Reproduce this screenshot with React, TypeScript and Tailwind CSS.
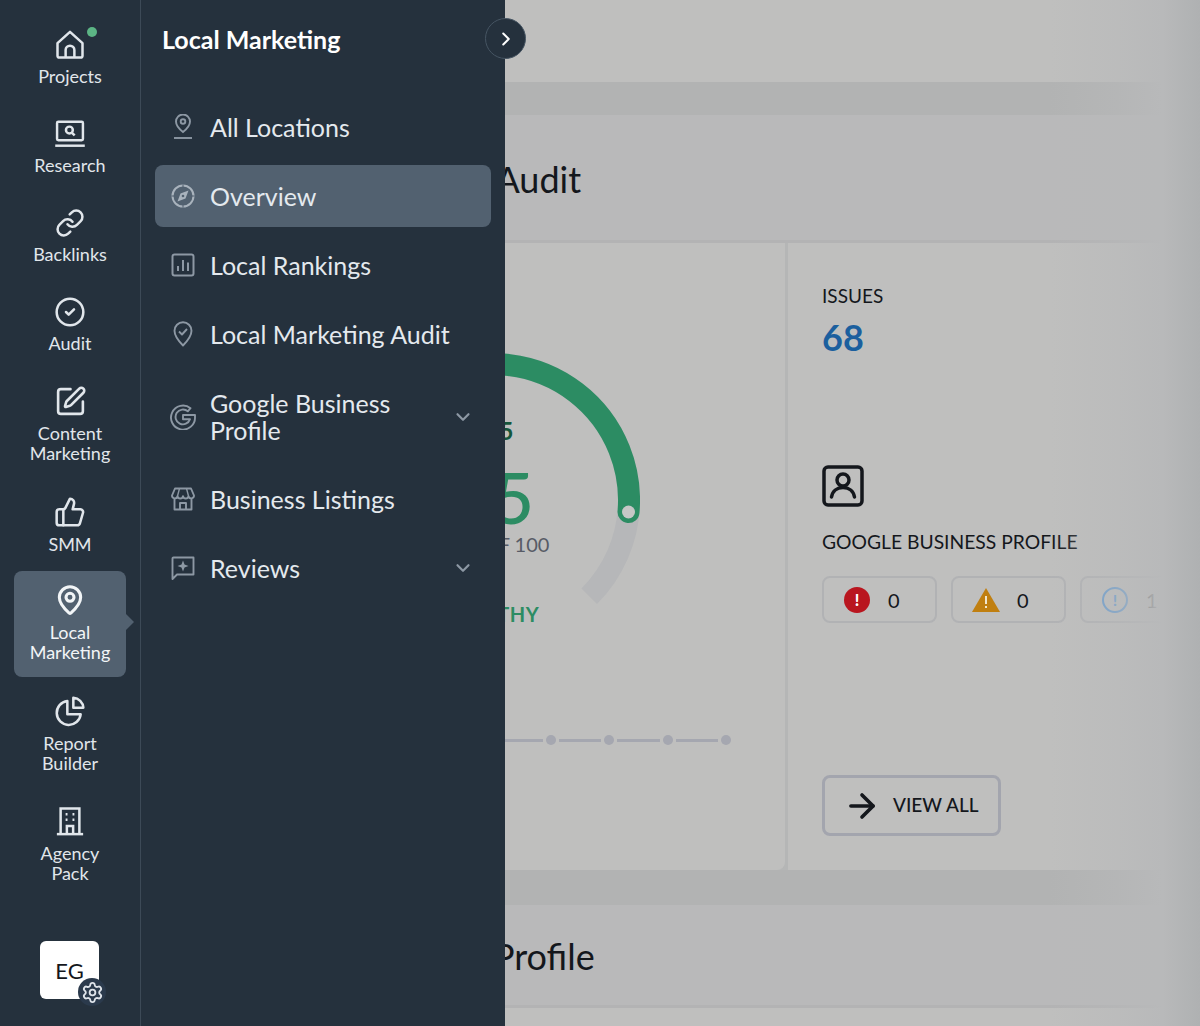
import { ReactNode } from 'react'
import {
  ArrowRight,
  ChevronDown,
  ChevronRight,
  CircleCheck,
  Link,
  MapPin,
  Settings,
  SquarePen,
  ThumbsUp,
} from 'lucide-react'

const font = { fontFamily: 'Lato, "Noto Sans", sans-serif' }

// custom icons where lucide has no close match
function HomeIcon() {
  return (
    <svg width="30" height="30" viewBox="0 0 24 24" fill="none" stroke="currentColor" strokeWidth="2" strokeLinejoin="round">
      <path d="M2 10.500 12 1.500l10 9V20.500a1.500 1.500 0 0 1-1.500 1.500H3.500A1.500 1.500 0 0 1 2 20.500z" />
      <path d="M8.500 22v-6a3.500 3.500 0 0 1 7 0v6" />
    </svg>
  )
}

function ResearchIcon() {
  return (
    <svg width="32" height="30" viewBox="0 0 26 24" fill="none" stroke="currentColor" strokeWidth="2">
      <rect x="2.500" y="2" width="21" height="15" rx="1" />
      <path d="M1 21.500h24" />
      <circle cx="12.500" cy="8.800" r="2.800" />
      <path d="m14.600 11 2.200 2.200" />
    </svg>
  )
}

function PieIcon() {
  return (
    <svg width="32" height="32" viewBox="0 0 24 24" fill="none" stroke="currentColor" strokeWidth="1.900" strokeLinejoin="round">
      <path d="M10 4.500a9 9 0 1 0 10 10h-10z" />
      <path d="M14.500 2a8 8 0 0 1 7.500 7.500h-7.500z" />
    </svg>
  )
}

function BuildingIcon() {
  return (
    <svg width="30" height="30" viewBox="0 0 24 24" fill="none" stroke="currentColor" strokeWidth="2">
      <path d="M4.500 22.500V2h15v20.500" />
      <path d="M1.500 22.500h21" />
      <path d="M9.500 22.500V16h5v6.500" />
      <path d="M8.500 6.500h1.500M14 6.500h1.500M8.500 11h1.500M14 11h1.500" />
    </svg>
  )
}

function LocationLineIcon() {
  return (
    <svg width="24" height="26" viewBox="0 0 24 26" fill="none" stroke="currentColor" strokeWidth="1.900">
      <path d="M12 18s-7-5.500-7-10.500a7 7 0 0 1 14 0C19 12.500 12 18 12 18z" />
      <circle cx="12" cy="7.500" r="2.300" />
      <path d="M3 24h18" />
    </svg>
  )
}

function CompassIcon() {
  return (
    <svg width="24" height="24" viewBox="0 0 24 24" fill="none">
      <circle cx="12" cy="12" r="10.500" stroke="currentColor" strokeWidth="2" />
      <path d="M12 .500v3M12 20.500v3M.500 12h3M20.500 12h3" stroke="#526170" strokeWidth="1" />
      <path d="M17.500 6.500 14.500 14.500 6.500 17.500 9.500 9.500z" fill="currentColor" />
      <circle cx="12" cy="12" r="1.300" fill="#526170" />
    </svg>
  )
}

function RankingsIcon() {
  return (
    <svg width="24" height="24" viewBox="0 0 24 24" fill="none" stroke="currentColor" strokeWidth="2">
      <rect x="1.500" y="1.500" width="21" height="21" rx="2" />
      <path d="M7 18v-5M12 18V7M17 18V9.500" />
    </svg>
  )
}

function PinCheckIcon() {
  return (
    <svg width="20" height="26" viewBox="0 0 20 26" fill="none" stroke="currentColor" strokeWidth="1.900" strokeLinejoin="round">
      <path d="M10 24.500S1.500 16 1.500 9.800a8.500 8.500 0 0 1 17 0C18.500 16 10 24.500 10 24.500z" />
      <path d="m6 10.500 3 3 5-5.500" />
    </svg>
  )
}

function GoogleOutlineIcon() {
  return (
    <svg width="26" height="26" viewBox="0 0 26 26" fill="none" stroke="currentColor" strokeWidth="1.900" strokeLinejoin="round">
      <path d="M20.500 4.200A12 12 0 1 0 25 13v-2H13v4.200h7A7.400 7.400 0 1 1 17.800 7.300z" />
    </svg>
  )
}

function StoreOutlineIcon() {
  return (
    <svg width="24" height="24" viewBox="0 0 24 24" fill="none" stroke="currentColor" strokeWidth="1.900" strokeLinejoin="round">
      <path d="M4 1.500h16l3 7a2.800 2.800 0 0 1-5.500.8 2.800 2.800 0 0 1-5.500 0 2.800 2.800 0 0 1-5.500 0A2.800 2.800 0 0 1 1 8.500z" />
      <path d="M3.500 12v10.500h17V12" />
      <path d="M9 22.500V16h6v6.500" />
      <path d="M8.500 1.500 6.500 9M15.500 1.500l2 7.500" strokeWidth="1.400" />
    </svg>
  )
}

function ReviewIcon() {
  return (
    <svg width="24" height="24" viewBox="0 0 24 24" fill="none" stroke="currentColor" strokeWidth="1.900" strokeLinejoin="round">
      <path d="M1.500 23V2.500a1 1 0 0 1 1-1h20v17H6z" />
      <path d="M12 4.500 13.500 8.500 17.500 10l-4 1.500L12 15.500l-1.500-4L6.500 10l4-1.500z" fill="currentColor" stroke="none" />
    </svg>
  )
}

function ProfileIcon() {
  return (
    <svg width="42" height="42" viewBox="0 0 42 42" fill="none" stroke="currentColor" strokeWidth="3.500">
      <rect x="2" y="2" width="38" height="38" rx="4" />
      <circle cx="21" cy="15" r="6" />
      <path d="M9.500 32c1-6 5.500-9.500 11.500-9.500S31.500 26 32.500 32" strokeLinecap="round" />
    </svg>
  )
}

function RailItem({
  icon,
  label,
  box,
  gap,
  active,
  dot,
}: {
  icon: ReactNode
  label: ReactNode
  box: string
  gap: string
  active?: boolean
  dot?: boolean
}) {
  return (
    <div
      className={`relative flex flex-col items-center mx-[14px] text-[18px] leading-5 text-center ${box} ${
        active ? 'rounded-lg bg-[#526170] text-[#f2f5f7]' : 'text-[#e1e6eb]'
      }`}
    >
      <div className="h-[30px] flex items-center justify-center">{icon}</div>
      <div className={gap}>{label}</div>
      {dot && <span className="absolute left-[73px] -top-[3px] w-2.5 h-2.5 rounded-full bg-[#5cb585]" />}
      {active && <span className="absolute -right-2 top-[43px] w-0 h-0 border-y-8 border-y-transparent border-l-8 border-l-[#526170]" />}
    </div>
  )
}

function SideRow({ icon, label, active, chevron, tall }: { icon: ReactNode; label: ReactNode; active?: boolean; chevron?: boolean; tall?: boolean }) {
  return (
    <div
      className={`flex items-center rounded-lg pl-[15px] pr-[17px] text-[25px] leading-[27px] text-[#e4e9ee] ${
        tall ? 'h-[89px]' : 'h-[62px]'
      } ${active ? 'bg-[#526170]' : ''}`}
    >
      <div className={`w-[26px] flex justify-center ${active ? 'text-[#a9b3bd]' : 'text-[#8d98a4]'}`}>{icon}</div>
      <div className="ml-[14px] flex-1">{label}</div>
      {chevron && <ChevronDown size={22} strokeWidth={2.4} className="text-[#8d98a4]" />}
    </div>
  )
}

function Badge({ icon, value }: { icon: ReactNode; value: string }) {
  return (
    <div className="w-[115px] h-[47px] shrink-0 flex items-center rounded-lg border-2 border-[#b1b2b4] pl-[19px]">
      <div className="w-7 flex justify-center">{icon}</div>
      <span className="ml-[17px] text-xl text-[#14171c]">{value}</span>
    </div>
  )
}

function Gauge() {
  return (
    <div className="relative w-[294px] h-[294px] flex flex-col items-center pt-[63px]">
      <svg className="absolute inset-0" width="294" height="294" viewBox="0 0 294 294" fill="none">
        <path d="M50.800 243.200A136 136 0 1 1 243.200 243.200" stroke="#b6b7b9" strokeWidth="22" />
        <path d="M50.800 243.200A136 136 0 1 1 282.500 159" stroke="#2c8c63" strokeWidth="22" strokeLinecap="round" />
        <circle cx="282.500" cy="159" r="6.500" fill="#c6c7c6" />
      </svg>
      <div className="relative text-2xl leading-[30px] font-bold text-[#14563b]">+15</div>
      <div className="relative mt-[17px] text-[72px] leading-[66px] font-medium text-[#2c8c63]">85</div>
      <div className="relative mt-[3px] text-xl leading-6 text-[#575b66]">OUT OF 100</div>
      <div className="relative mt-[46px] text-xl leading-6 font-bold tracking-wide text-[#2c8c63]">HEALTHY</div>
    </div>
  )
}

export default function App() {
  const points = [0, 1, 2, 3, 4, 5, 6, 7, 8]

  return (
    <div className="relative flex w-[1200px] h-[1026px] overflow-hidden bg-[#bfbfbe]" style={font}>
      {/* Left rail */}
      <nav className="w-[141px] shrink-0 flex flex-col bg-[#25313d] border-r border-[#3d4a57] pt-[30px]">
        <RailItem icon={<HomeIcon />} label="Projects" box="h-[89px]" gap="mt-1.5" dot />
        <RailItem icon={<ResearchIcon />} label="Research" box="h-[89px]" gap="mt-1.5" />
        <RailItem icon={<Link size={30} strokeWidth={2} />} label="Backlinks" box="h-[89px]" gap="mt-1.5" />
        <RailItem icon={<CircleCheck size={32} strokeWidth={1.9} />} label="Audit" box="h-[89px]" gap="mt-1.5" />
        <RailItem icon={<SquarePen size={33} strokeWidth={1.9} />} label={<>Content<br />Marketing</>} box="h-[111px]" gap="mt-[7px]" />
        <RailItem icon={<ThumbsUp size={32} strokeWidth={1.9} />} label="SMM" box="h-[74px]" gap="mt-[7px]" />
        <RailItem
          icon={<MapPin size={32} strokeWidth={2.300} />}
          label={<>Local<br />Marketing</>}
          box="h-[106px] pt-[14px]"
          gap="mt-[7px]"
          active
        />
        <div className="mt-[19px]">
          <RailItem icon={<PieIcon />} label={<>Report<br />Builder</>} box="h-[110px]" gap="mt-[7px]" />
        </div>
        <RailItem icon={<BuildingIcon />} label={<>Agency<br />Pack</>} box="h-[80px]" gap="mt-[7px]" />
        <div className="mt-auto mb-[27px] ml-10 relative w-[59px] h-[58px] rounded-md bg-white flex items-center justify-center text-[22px] text-[#14171c]">
          EG
          <span className="absolute -right-[7px] -bottom-[7px] w-7 h-7 rounded-full bg-[#2b3a4c] flex items-center justify-center text-[#dfe4ea]">
            <Settings size={23} strokeWidth={1.9} />
          </span>
        </div>
      </nav>

      {/* Page behind the panel */}
      <main className="flex-1 min-w-0">
        <div className="h-[82px] bg-[#bfbfbe]" />
        <div className="h-[33px] bg-[#b2b3b3]" />
        <div className="h-[125px] flex items-center pl-[95px] pt-0.5 bg-[#b9b9ba] text-[36px] text-[#14171c] whitespace-nowrap">Local Marketing Audit</div>
        <div className="h-[3px] bg-[#b3b3b4]" />
        <div className="h-[627px] flex pl-[59px] gap-[3px] bg-[#b5b6b6]">
          <div className="w-[585px] flex flex-col items-center pt-[110px] bg-[#bfbfbe] rounded-br-lg">
            <Gauge />
            <div className="mt-[88px] flex items-center">
              {points.map((i) => (
                <div key={i} className="flex items-center">
                  {i > 0 && <span className="w-[42.400px] h-[3px] mx-[3px] bg-[#a5a7b0]" />}
                  <span className="w-2.5 h-2.5 rounded-full bg-[#a5a7b0]" />
                </div>
              ))}
            </div>
          </div>
          <div className="flex-1 min-w-0 pl-[34px] pt-[43px] bg-[#bfbfbe] text-[#14171c]">
            <div className="text-[19px] leading-5">ISSUES</div>
            <div className="mt-[11px] text-[36px] leading-10 font-bold text-[#1b5f9e]">68</div>
            <div className="mt-[108px]">
              <ProfileIcon />
            </div>
            <div className="mt-[25px] text-[19.300px] leading-5 whitespace-nowrap">GOOGLE BUSINESS PROFILE</div>
            <div className="mt-6 flex gap-[14px]">
              <Badge
                value="0"
                icon={
                  <span className="w-[26px] h-[26px] rounded-full bg-[#b9161f] flex items-center justify-center text-white text-base font-black">!</span>
                }
              />
              <Badge
                value="0"
                icon={
                  <svg width="28" height="26" viewBox="0 0 28 26">
                    <path d="M14 1 28 25H0z" fill="#c07f10" />
                    <path d="M13 9h2v8h-2zM13 19h2v2h-2z" fill="#f1e6cc" />
                  </svg>
                }
              />
              <Badge
                value="1"
                icon={
                  <span className="w-[26px] h-[26px] rounded-full border-2 border-[#5f98d0] flex items-center justify-center text-[#5f98d0] text-base font-bold">!</span>
                }
              />
            </div>
            <div className="mt-[152px] w-[179px] h-[61px] flex items-center rounded-lg border-[3px] border-[#a3a5ae] pl-[18px]">
              <ArrowRight size={38} strokeWidth={2.300} />
              <span className="ml-3 text-[19px] font-medium">VIEW ALL</span>
            </div>
          </div>
        </div>
        <div className="h-[35px] bg-[#b2b3b3]" />
        <div className="h-[100px] flex items-center pl-[83px] pt-0.5 bg-[#b9b9ba] text-[36px] text-[#14171c] whitespace-nowrap">Google Business Profile</div>
        <div className="h-[21px] bg-[#bfbfbe] border-t-[3px] border-[#b3b3b4]" />
      </main>

      {/* Fade on the right edge of the page */}
      <div className="absolute right-0 top-0 bottom-0 w-[150px] bg-[linear-gradient(to_right,transparent,rgba(184,185,186,0.5)_45%,#b8b9ba_75%,#afb1b2)] pointer-events-none" />

      {/* Open panel over the page */}
      <aside className="absolute left-[141px] top-0 bottom-0 w-[364px] bg-[#25313d]">
        <div className="pl-[21px] pt-[23px] h-[96px] text-[25px] leading-8 font-bold text-white">Local Marketing</div>
        <div className="flex flex-col gap-[7px] pl-[14px] pr-[14px]">
          <SideRow icon={<LocationLineIcon />} label="All Locations" />
          <SideRow icon={<CompassIcon />} label="Overview" active />
          <SideRow icon={<RankingsIcon />} label="Local Rankings" />
          <SideRow icon={<PinCheckIcon />} label="Local Marketing Audit" />
          <SideRow icon={<GoogleOutlineIcon />} label="Google Business Profile" chevron tall />
          <SideRow icon={<StoreOutlineIcon />} label="Business Listings" />
          <SideRow icon={<ReviewIcon />} label="Reviews" chevron />
        </div>
      </aside>
      <button className="absolute left-[485px] top-[18px] w-[41px] h-[41px] rounded-full bg-[#25313d] border border-[#465563] flex items-center justify-center text-white">
        <ChevronRight size={22} strokeWidth={2.200} />
      </button>
    </div>
  )
}
